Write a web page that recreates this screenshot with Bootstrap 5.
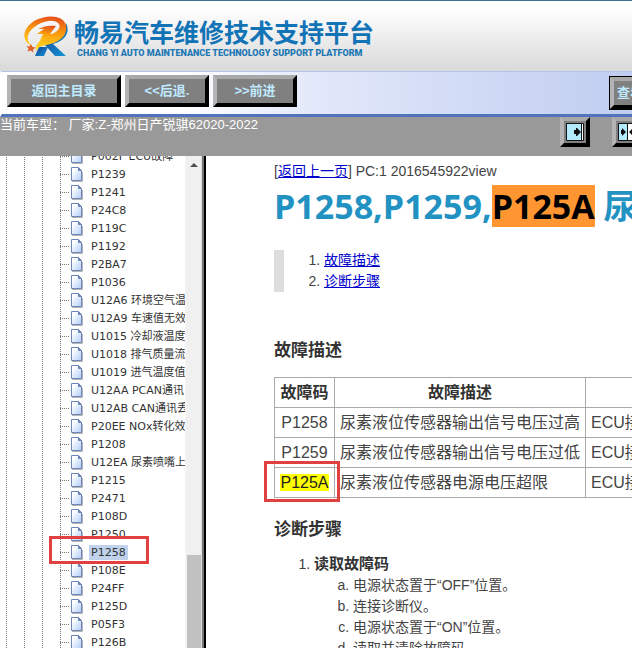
<!DOCTYPE html>
<html lang="zh-CN">
<head>
<meta charset="utf-8">
<meta name="viewport" content="width=device-width, initial-scale=1">
<title>畅易汽车维修技术支持平台</title>
<link href="https://cdn.jsdelivr.net/npm/bootstrap@5.3.0/dist/css/bootstrap.min.css" rel="stylesheet">
<style>
body{font-family:"Liberation Sans","Noto Sans CJK SC",sans-serif;font-size:14px;line-height:21px;color:#444;background:#fff}
.masthead{border-top:1px solid #3c7196;padding:14px 0 11px 23px;background:linear-gradient(#fff 10%,#d9d9d9)}
.brand-zh{font:bold 25px/32px "Noto Sans CJK SC",sans-serif;color:#1274b6}
.brand-en{font:900 9px/13px Roboto,"Liberation Sans",sans-serif;color:#1f78b4;padding-left:3px}
.toolbar{height:46px;padding:3px 0 0 5px;border-top:1px solid #b4c4e6;border-left:2px solid #fff;border-bottom:3px solid #5272bc;background:linear-gradient(90deg,#fff 28%,#e2e8fa 50%,#c0cdf0)}
.bevel{border:4px solid;border-color:#a8a8a8 #000 #000 #b4b4b4;background:#808080;color:#bfeaff;border-radius:0;padding:0;flex:none}
.tool{font:bold 13px/22px "Liberation Sans","Noto Sans CJK SC",sans-serif;height:32px}
.w-main{width:114px}.w-step{width:84px}
.query{outline:1px solid #000;width:60px;margin:2px -38px 0 auto;text-align:left;padding-left:3px}
.statusbar{height:39px;background:#999;color:#fff;font-size:13px;line-height:16px}
.pane-btn{width:30px;height:30px;line-height:0}
.pane-tools{gap:22px;margin-right:-10px}
.tree-pane{width:206px;flex:none;border-right:2px solid #000}
.tree-scroll{width:16px;background:#f0f0f0;border-left:1px solid #f5f5f5}
.tree-edge{width:3px;background:linear-gradient(90deg,#ddd 1px,#777 1px)}
.thumb{background:#c1c1c1;margin-left:1px;flex:93}
.track{flex:385}
.tree{font:11px/18px "DejaVu Sans","Noto Sans CJK SC",sans-serif;margin-top:-9px;color:#333;
background:repeating-linear-gradient(#777 0 1px,transparent 1px 2px) 6px 0/1px 100% no-repeat,repeating-linear-gradient(#777 0 1px,transparent 1px 2px) 24px 0/1px 100% no-repeat,repeating-linear-gradient(#777 0 1px,transparent 1px 2px) 42px 0/1px 100% no-repeat,repeating-linear-gradient(#777 0 1px,transparent 1px 2px) 60px 0/1px 100% no-repeat}
.tree li{height:18px;padding-left:60px;white-space:nowrap}
.tree li::before{content:"";flex:none;width:10px;height:1px;background:repeating-linear-gradient(90deg,#777 0 1px,transparent 1px 2px)}
.tree svg{flex:none;margin:1px 6px 0 0}
.tree a{color:#333;text-decoration:none;padding:0 2px;line-height:15px}
.tree a.picked{background:#c0d2ec}
.callout-box{position:absolute;border:3px solid #e04040;pointer-events:none}
.box-node{left:49px;top:-7px;width:100px;height:28px}
.box-code{left:-16px;top:-7px;width:76px;height:41px}
.doc{padding:5px 0 0 15px;margin-left:53px}
.doc-wrap{min-width:0}
.doc a{color:#00c}
.doc h1{font:bold 34px/42px "Open Sans","Noto Sans CJK SC",sans-serif;color:#2292c3;margin:3px 0 23px;white-space:nowrap}
.doc h1 span{display:inline-block;background:#ff9632;color:#000}
.doc h2{font:bold 17px/21px "Liberation Sans","Noto Sans CJK SC",sans-serif;color:#333;margin:0}
.toc{border-left:10px solid #ddd;padding-left:40px;margin-bottom:48px}
.codes{font-size:16px;margin:16px 0 21px;width:600px;table-layout:fixed;line-height:29px;white-space:nowrap}
.codes th,.codes td{border:1px solid #aaa;padding:0 5px}
.codes td{color:#444}.codes th{color:#333}
.codes tr>:nth-child(1){width:60px;text-align:center}
.codes tr>:nth-child(2){width:251px}
.codes th:nth-child(2),.codes th:nth-child(3){text-align:center}
.codes mark{padding:0;background:#ff0;color:#222;line-height:17px;display:inline-block}
.steps{padding-left:40px;margin:13px 0 0}
.steps b{font-size:15px;color:#333}
.steps ol{list-style:lower-alpha;padding-left:39px;margin:0}
</style>
<script src="https://cdn.jsdelivr.net/npm/bootstrap@5.3.0/dist/js/bootstrap.bundle.min.js"></script>
</head>
<body>
<svg class="position-absolute" width="0" height="0" aria-hidden="true"><defs>
<linearGradient id="pg" x2="1" y2="1"><stop offset=".2" stop-color="#fff"/><stop offset="1" stop-color="#b0cdfa"/></linearGradient>
<symbol id="page" viewBox="0 0 13 15"><path d="M12.500 5v9.500H2" fill="none" stroke="#b5b5b5"/><path d="M1.500.5h7l3 3V13.500h-10z" fill="url(#pg)" stroke="#6e84b4"/><path d="M8.500.5v3h3z" fill="#6e84b4" stroke="#6e84b4"/></symbol>
</defs></svg>
<div class="d-flex flex-column vh-100 overflow-hidden">
<header class="masthead d-flex">
<svg class="flex-shrink-0" width="47" height="43" viewBox="0 0 47 43" aria-hidden="true">
<defs><linearGradient id="sun" x1=".6" y1="0" x2=".4" y2="1"><stop stop-color="#e5501b"/><stop offset=".45" stop-color="#fb9d0c"/><stop offset="1" stop-color="#ffdc25"/></linearGradient><linearGradient id="sea" x2="1" y2="1"><stop stop-color="#123c8c"/><stop offset="1" stop-color="#159bdc"/></linearGradient></defs>
<path d="M43 8c5 10-2 18-13 21l13 12H32L22 30C36 27 43 18 43 8z" fill="url(#sea)"/>
<path d="M16 32h9l-4 9h-9z" fill="url(#sea)"/>
<path fill-rule="evenodd" d="M9 31C-2 26-1 14 11 6 24-1 40 0 43 10c2 10-6 18-20 20-6 1-8 3-10 6-1-8 5-12 14-16 8-3 12-8 8-12C29 3 16 7 8 15c-5 6-4 12 1 16z" fill="url(#sun)"/>
<path d="M15 14c6-3 12-4 18-3l-6 8h4c-6 2-12 5-16 11l5-11h-6l7-5z" fill="url(#sun)"/>
<path d="M8 29l1.500 3 3.500.500-3 2 .5 3-3-2-3 1 1-3-2-2.500 3 .5z" fill="#e0622a"/></svg>
<div class="ps-1"><div class="brand-zh">畅易汽车维修技术支持平台</div><div class="brand-en">CHANG YI AUTO MAINTENANCE TECHNOLOGY SUPPORT PLATFORM</div></div>
</header>
<nav class="toolbar d-flex gap-1 align-items-start overflow-hidden flex-shrink-0">
<button type="button" class="bevel tool w-main">返回主目录</button>
<button type="button" class="bevel tool w-step">&lt;&lt;后退.</button>
<button type="button" class="bevel tool w-step">&gt;&gt;前进</button>
<button type="button" class="bevel tool query">查看</button>
</nav>
<div class="statusbar d-flex align-items-start justify-content-between overflow-hidden flex-shrink-0">
<div>当前车型： 厂家:Z-郑州日产锐骐62020-2022</div>
<div class="pane-tools d-flex">
<button type="button" class="bevel pane-btn" aria-label="展开"><svg width="18" height="18"><path d="M.5.5h17v17H.5z" fill="#fff" stroke="#111"/><path d="M1 1h14v16H1z" fill="#b4ebfc"/><path d="M15.500 1v16" stroke="#111"/><path d="M8 7h2V5h1l4 4-4 4h-1v-2H8z" fill="#111"/></svg></button>
<button type="button" class="bevel pane-btn" aria-label="分栏"><svg width="18" height="18"><path d="M.5.5h17v17H.5z" fill="#fff" stroke="#111"/><path d="M1 1h8v16H1z" fill="#b4ebfc"/><path d="M9.500 1v16" stroke="#111"/><path d="M3 7h1V5l4 4-4 4v-2H3zM16 7h-1V5l-4 4 4 4v-2h1z" fill="#111"/></svg></button>
</div></div>
<div class="d-flex flex-grow-1 overflow-hidden">
<aside class="tree-pane d-flex overflow-hidden">
<ul class="tree list-unstyled mb-0 flex-grow-1 overflow-hidden" id="tree"></ul>
<div class="tree-scroll d-flex flex-column"><svg width="15" height="14"><path d="M4 11l4-4 4 4z" fill="#505050"/></svg><div class="track"></div><div class="thumb"></div></div>
<div class="tree-edge"></div>
</aside>
<main class="doc-wrap flex-grow-1 overflow-hidden"><div class="doc">
<div>[<a href="#">返回上一页</a>] PC:1 2016545922view</div>
<h1>P1258,P1259,<span>P125A</span> 尿素液位传感器</h1>
<ol class="toc"><li><a href="#desc">故障描述</a></li><li><a href="#steps">诊断步骤</a></li></ol>
<h2 id="desc">故障描述</h2>
<table class="codes">
<tr><th>故障码</th><th>故障描述</th><th></th></tr>
<tr><td>P1258</td><td>尿素液位传感器输出信号电压过高</td><td>ECU接</td></tr>
<tr><td>P1259</td><td>尿素液位传感器输出信号电压过低</td><td>ECU接</td></tr>
<tr><td><div class="position-relative"><mark>P125A</mark><span class="callout-box box-code"></span></div></td><td>尿素液位传感器电源电压超限</td><td>ECU接</td></tr>
</table>
<h2 id="steps">诊断步骤</h2>
<ol class="steps"><li><b>读取故障码</b><ol><li>电源状态置于“OFF”位置。</li><li>连接诊断仪。</li><li>电源状态置于“ON”位置。</li><li>读取并清除故障码。</li></ol></li></ol>
</div></main>
</div>
</div>
<script>
const codes=["P002F ECU故障","P1239","P1241","P24C8","P119C","P1192","P2BA7","P1036","U12A6 环境空气温","U12A9 车速值无效","U1015 冷却液温度","U1018 排气质量流","U1019 进气温度值","U12AA PCAN通讯","U12AB CAN通讯丢","P20EE NOx转化效","P1208","U12EA 尿素喷嘴上","P1215","P2471","P108D","P1250","P1258","P108E","P24FF","P125D","P05F3","P126B"];
document.getElementById("tree").innerHTML=codes.map(c=>{const on=c==="P1258";return `<li class="d-flex align-items-center position-relative"><svg width="13" height="15" aria-hidden="true"><use href="#page"/></svg><a href="#"${on?' class="picked"':""}>${c}</a>${on?'<span class="callout-box box-node z-1"></span>':""}</li>`}).join("");
</script>
</body>
</html>
